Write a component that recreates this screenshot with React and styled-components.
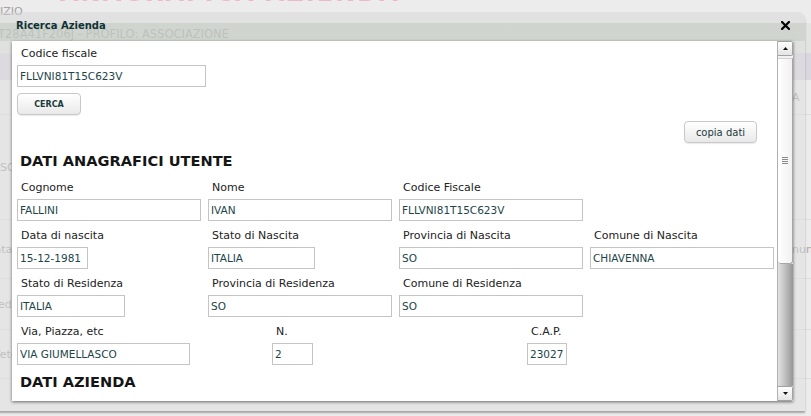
import styled, { createGlobalStyle } from "styled-components";

const GlobalStyle = createGlobalStyle`
  html, body {
    margin: 0;
    padding: 0;
  }
  body {
    background: #ececec;
    font-family: "DejaVu Sans", Verdana, sans-serif;
    overflow: hidden;
  }
`;

const Page = styled.div`
  position: relative;
  width: 811px;
  height: 416px;
  overflow: hidden;
`;

/* ---------- page behind the dialog ---------- */

const Backdrop = styled.div`
  display: flex;
  flex-direction: column;
  height: 100%;
`;

const BrandStrip = styled.div`
  height: 4px;
  overflow: hidden;
  padding-left: 60px;
`;

const Brand = styled.div`
  margin-top: -21px;
  font-size: 24px;
  font-weight: bold;
  letter-spacing: 2px;
  color: #f0b8c6;
`;

const Service = styled.div`
  height: 19px;
  font-size: 11px;
  line-height: 16px;
  color: #a2a2a2;
`;

const UserBand = styled.div`
  height: 30px;
  background: #e2e4e1;
  font-size: 11.5px;
  line-height: 22px;
  color: #969896;
  white-space: nowrap;
  span {
    margin-left: -2px;
  }
`;

const MenuBar = styled.div`
  height: 27px;
  background: #dad7e0;
`;

const BackRow = styled.div`
  height: ${(p) => p.$h}px;
  display: flex;
  align-items: center;
  justify-content: space-between;
  border-bottom: 1px solid #dedede;
  font-size: 11px;
  color: #a8a8a8;
  white-space: nowrap;
`;

const LeftStub = styled.div`
  width: 12px;
  overflow: hidden;
  span {
    display: inline-block;
    margin-left: ${(p) => p.$shift || 0}px;
  }
`;

const RightStub = styled.div`
  width: 19px;
  overflow: hidden;
`;

/* ---------- dialog ---------- */

const Dialog = styled.div`
  position: absolute;
  left: -2px;
  top: 12px;
  width: 807px;
  height: 399px;
  display: flex;
  flex-direction: column;
  background: rgba(222, 222, 222, 0.45);
  border-radius: 0 7px 0 0;
  box-shadow: 0 2px 2px rgba(0, 0, 0, 0.3);
`;

const TitleBar = styled.div`
  height: 29px;
  flex-shrink: 0;
  display: flex;
  justify-content: space-between;
  align-items: flex-start;
  padding: 8px 15px 0 18px;
  box-sizing: border-box;
  background: linear-gradient(
    to bottom,
    rgba(0, 0, 0, 0.02) 0,
    rgba(0, 0, 0, 0.02) 11px,
    rgba(194, 202, 193, 0.55) 11px
  );
  border-radius: 0 7px 0 0;
`;

const Title = styled.div`
  font-size: 10px;
  font-weight: bold;
  line-height: 12px;
  color: #0e3236;
`;

const Close = styled.button`
  margin: 1px 0 0;
  padding: 0;
  width: 9px;
  height: 9px;
  border: none;
  background: none;
  display: flex;
`;

const Body = styled.div`
  margin-left: 14px;
  width: 781px;
  height: 360px;
  display: flex;
  background: #fff;
  box-shadow: 0 1px 3px rgba(0, 0, 0, 0.55);
`;

const Content = styled.div`
  flex: 1;
  overflow: hidden;
  padding: 4px 0 0 5px;
  color: #222;
`;

const Label = styled.div`
  font-size: 11px;
  line-height: 18px;
  padding: 0 0 2px 4px;
  white-space: nowrap;
`;

const Input = styled.input`
  display: block;
  width: ${(p) => p.$w || 184}px;
  height: 22px;
  box-sizing: border-box;
  margin: 0;
  padding: 0 2px;
  border: 1px solid #c4c4c4;
  font-family: inherit;
  font-size: 10.5px;
  color: #1c4549;
  background: #fff;
  outline: none;
`;

const Button = styled.button`
  height: 22px;
  box-sizing: border-box;
  padding: 0;
  border: 1px solid #c8c8c8;
  border-radius: 4px;
  background: linear-gradient(#ffffff, #e9e9e9);
  font-family: inherit;
  font-size: ${(p) => (p.$bold ? 8 : 10)}px;
  font-weight: ${(p) => (p.$bold ? "bold" : "normal")};
  color: #1a3a3c;
  box-shadow: 0 1px 1px rgba(0, 0, 0, 0.08);
`;

const SearchButton = styled(Button)`
  margin-top: 6px;
  width: 64px;
`;

const CopyRow = styled.div`
  display: flex;
  justify-content: flex-end;
  padding: 6px 20px 0 0;
`;

const CopyButton = styled(Button)`
  width: 73px;
`;

const Heading = styled.div`
  font-size: 14.6px;
  font-weight: bold;
  line-height: 20px;
  color: #151515;
  padding-left: 3px;
  margin: ${(p) => p.$m || "8px 0 8px"};
`;

const Grid = styled.div`
  display: grid;
  grid-template-columns: repeat(${(p) => p.$cols}, ${(p) => p.$col}px);
  column-gap: ${(p) => p.$gap}px;
`;

const Field = styled.div`
  margin-bottom: 6px;
`;

/* ---------- scrollbar ---------- */

const Scrollbar = styled.div`
  width: 16px;
  display: flex;
  flex-direction: column;
  box-sizing: border-box;
  border-left: 1px solid #b0b0b0;
  background: #f2f2f2;
`;

const ScrollButton = styled.div`
  height: 15px;
  flex-shrink: 0;
  box-sizing: border-box;
  border: 1px solid #a2a2a2;
  border-left: none;
  border-radius: 0 2px 2px 0;
  background: linear-gradient(#ffffff, #e4e4e4);
  display: flex;
  align-items: center;
  justify-content: center;
`;

const Thumb = styled.div`
  height: 206px;
  margin-top: 2px;
  flex-shrink: 0;
  box-sizing: border-box;
  border: 1px solid #a6a6a6;
  border-left: none;
  border-top-color: #d2d2d2;
  border-radius: 0 0 3px 3px;
  background: linear-gradient(to right, #ffffff, #f1f1f1);
  display: flex;
  align-items: center;
  justify-content: center;
`;

const Track = styled.div`
  flex: 1;
  background: linear-gradient(to right, #e2e2e2, #bababa 55%, #969696);
`;

const Arrow = ({ down }) => (
  <svg width="5" height="3" viewBox="0 0 5 3">
    <polygon points={down ? "0,0 5,0 2.5,3" : "0,3 5,3 2.5,0"} fill="#111" />
  </svg>
);

const Grip = () => (
  <svg width="6" height="8" viewBox="0 0 6 8">
    {[0.5, 2.5, 4.5, 6.5].map((y) => (
      <line key={y} x1="0" x2="6" y1={y} y2={y} stroke="#8a8a8a" strokeWidth="1" />
    ))}
  </svg>
);

const CloseIcon = () => (
  <svg width="9" height="9" viewBox="0 0 9 9">
    <path d="M1 1 L8 8 M8 1 L1 8" stroke="#000" strokeWidth="2.2" strokeLinecap="square" />
  </svg>
);

const personRows = [
  [
    { label: "Cognome", value: "FALLINI" },
    { label: "Nome", value: "IVAN" },
    { label: "Codice Fiscale", value: "FLLVNI81T15C623V" },
  ],
  [
    { label: "Data di nascita", value: "15-12-1981", w: 71 },
    { label: "Stato di Nascita", value: "ITALIA", w: 107 },
    { label: "Provincia di Nascita", value: "SO" },
    { label: "Comune di Nascita", value: "CHIAVENNA" },
  ],
  [
    { label: "Stato di Residenza", value: "ITALIA", w: 108 },
    { label: "Provincia di Residenza", value: "SO" },
    { label: "Comune di Residenza", value: "SO" },
  ],
];

const address = [
  { label: "Via, Piazza, etc", value: "VIA GIUMELLASCO", w: 173 },
  { label: "N.", value: "2", w: 41 },
  { label: "C.A.P.", value: "23027", w: 40 },
];

const backRows = [
  { h: 34, right: "A" },
  { h: 104, left: "SCI" },
  { h: 58, left: "Data", shift: -14, right: "nun" },
  { h: 50, left: "Sede", shift: -9 },
  { h: 48, left: "Vetc", shift: -7 },
];

const FormField = ({ label, value, w }) => (
  <Field>
    <Label>{label}</Label>
    <Input $w={w} value={value} readOnly />
  </Field>
);

const App = () => {
  return (
    <Page>
      <GlobalStyle />
      <Backdrop>
        <BrandStrip>
          <Brand>ANAGRAFICA AZIENDA</Brand>
        </BrandStrip>
        <Service>IZIO</Service>
        <UserBand>
          <span>T28A41F206J - PROFILO: ASSOCIAZIONE</span>
        </UserBand>
        <MenuBar />
        {backRows.map((r, i) => (
          <BackRow key={i} $h={r.h}>
            <LeftStub $shift={r.shift}>
              <span>{r.left}</span>
            </LeftStub>
            <RightStub>{r.right}</RightStub>
          </BackRow>
        ))}
      </Backdrop>

      <Dialog>
        <TitleBar>
          <Title>Ricerca Azienda</Title>
          <Close aria-label="chiudi">
            <CloseIcon />
          </Close>
        </TitleBar>
        <Body>
          <Content>
            <Label>Codice fiscale</Label>
            <Input $w={189} value="FLLVNI81T15C623V" readOnly />
            <SearchButton $bold>CERCA</SearchButton>
            <CopyRow>
              <CopyButton>copia dati</CopyButton>
            </CopyRow>

            <Heading>DATI ANAGRAFICI UTENTE</Heading>
            {personRows.map((row, i) => (
              <Grid key={i} $cols={4} $col={184} $gap={7}>
                {row.map((f) => (
                  <FormField key={f.label} {...f} />
                ))}
              </Grid>
            ))}
            <Grid $cols={3} $col={255} $gap={0}>
              {address.map((f) => (
                <FormField key={f.label} {...f} />
              ))}
            </Grid>

            <Heading $m="1px 0 0">DATI AZIENDA</Heading>
          </Content>
          <Scrollbar>
            <ScrollButton>
              <Arrow />
            </ScrollButton>
            <Thumb>
              <Grip />
            </Thumb>
            <Track />
            <ScrollButton>
              <Arrow down />
            </ScrollButton>
          </Scrollbar>
        </Body>
      </Dialog>
    </Page>
  );
};

export default App;
